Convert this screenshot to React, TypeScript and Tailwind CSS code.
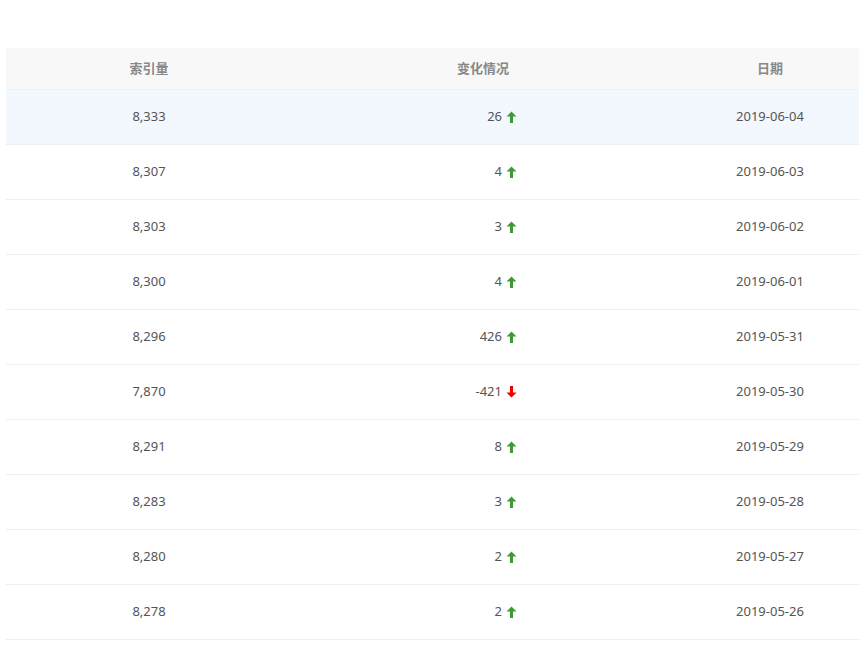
const rows: [string, string, boolean, string][] = [
  ["8,333", "26", true, "2019-06-04"],
  ["8,307", "4", true, "2019-06-03"],
  ["8,303", "3", true, "2019-06-02"],
  ["8,300", "4", true, "2019-06-01"],
  ["8,296", "426", true, "2019-05-31"],
  ["7,870", "-421", false, "2019-05-30"],
  ["8,291", "8", true, "2019-05-29"],
  ["8,283", "3", true, "2019-05-28"],
  ["8,280", "2", true, "2019-05-27"],
  ["8,278", "2", true, "2019-05-26"],
];

function Arrow({ up }: { up: boolean }) {
  const c = up ? "#3f9a35" : "#f00000";
  return (
    <svg width="11" height="12" viewBox="0 0 11 12" className="ml-[4px]" style={{ transform: up ? "none" : "rotate(180deg)" }}>
      <path d="M5.5 0.5 L10.5 5.5 H7 V12 H4 V5.5 H0.5 Z" fill={c} />
    </svg>
  );
}

export default function App() {
  return (
    <div className="w-[859px] h-[649px] bg-white overflow-hidden pt-[48px] pl-[6px]" style={{ fontFamily: '"Noto Sans", "Noto Sans CJK SC", sans-serif' }}>
      <div className="w-[860px] text-[13px]">
        <div className="flex h-[42px] items-center bg-[#f8f8f8] border-b border-[#eeeeee] text-[#888] font-bold">
          <div className="w-[286px] text-center">索引量</div>
          <div className="w-[382px] text-center">变化情况</div>
          <div className="w-[192px] text-center">日期</div>
        </div>
        {rows.map((r, i) => (
          <div key={i} className={`flex h-[55px] items-center border-b border-[#eeeeee] text-[#555] ${i === 0 ? "bg-[#f3f7fe]" : ""}`}>
            <div className="w-[286px] text-center">{r[0]}</div>
            <div className="w-[382px] flex justify-end items-center pr-[157px]">
              <span>{r[1]}</span>
              <Arrow up={r[2]} />
            </div>
            <div className="w-[192px] text-center">{r[3]}</div>
          </div>
        ))}
      </div>
    </div>
  );
}
